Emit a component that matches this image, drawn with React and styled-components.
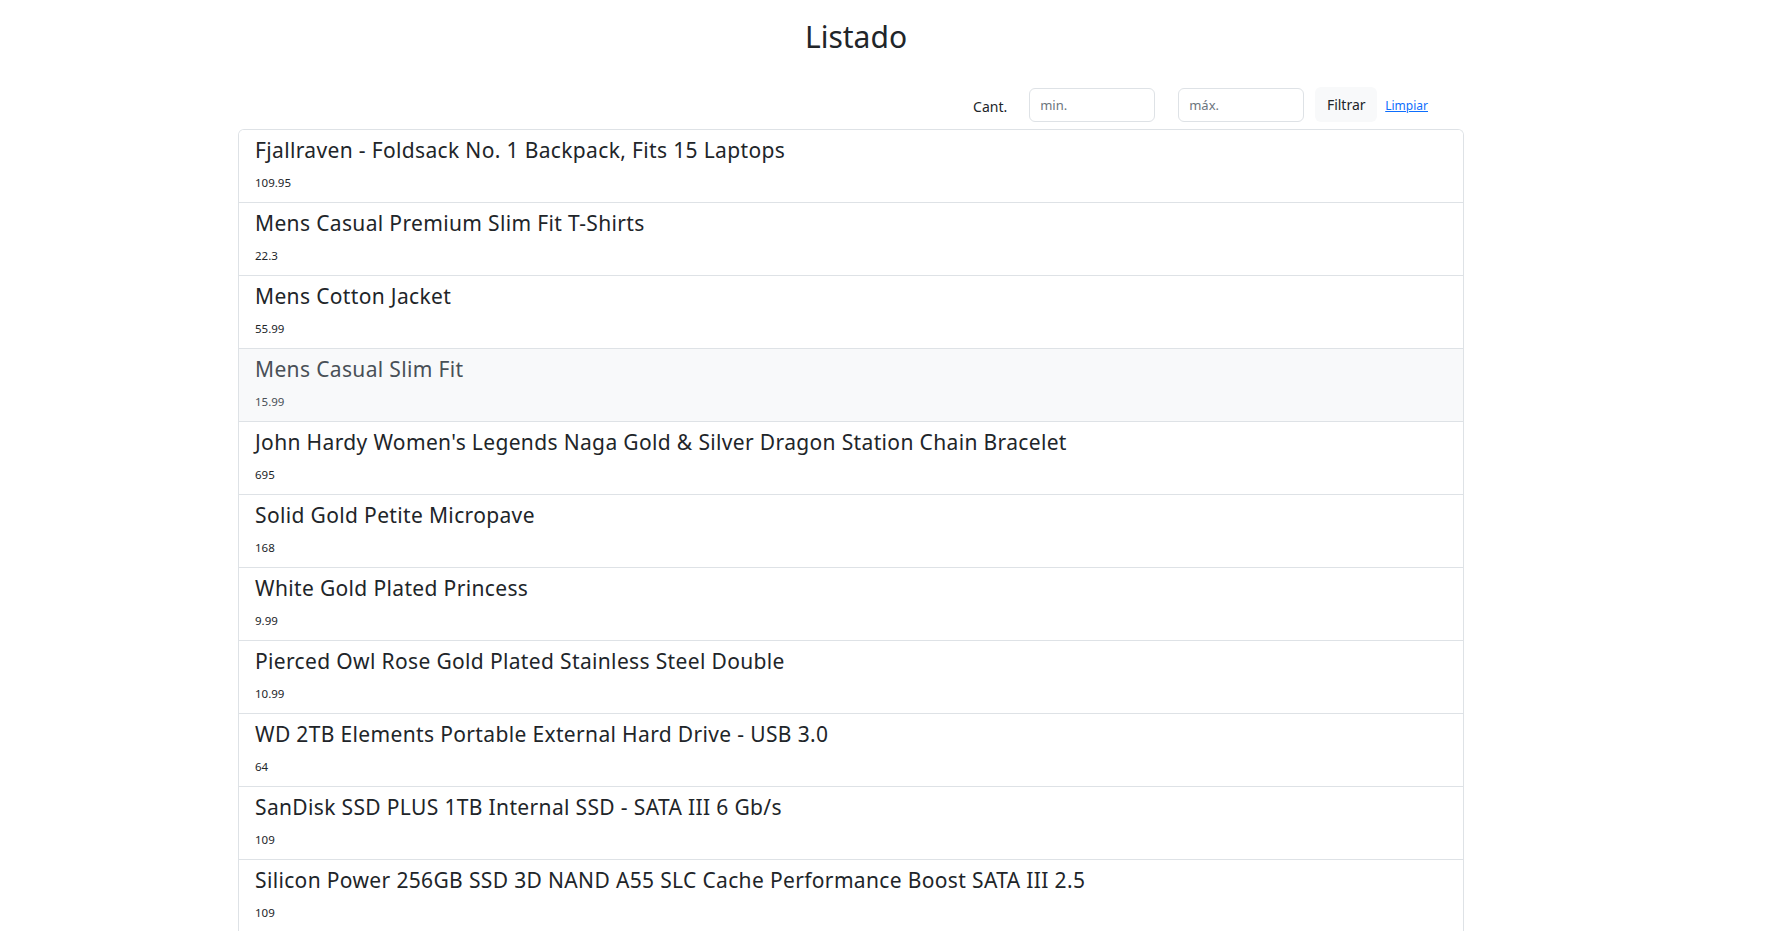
import React from "react";
import styled, { createGlobalStyle } from "styled-components";

const Global = createGlobalStyle`
  html, body { margin: 0; padding: 0; background: #fff; }
  body {
    font-family: "Noto Sans", "Open Sans", sans-serif;
    color: #212529;
  }
  * { box-sizing: border-box; }
`;

const Page = styled.div`
  width: 1226px;
  margin-left: 238px;
  padding-top: 18px;
`;

const Title = styled.h2`
  margin: 0;
  font-size: 30px;
  font-weight: 400;
  line-height: 38px;
  text-align: center;
  color: #212529;
  padding-left: 10px;
`;

const FilterBar = styled.form`
  display: flex;
  justify-content: flex-end;
  align-items: center;
  margin-top: 31px;
  padding-right: 36px;
  height: 35px;
  margin-bottom: 7px;
`;

const Label = styled.span`
  font-size: 14px;
  margin-right: 22px;
  padding-top: 3px;
`;

const Input = styled.input`
  width: 126px;
  height: 34px;
  border: 1px solid #dee2e6;
  border-radius: 6px;
  padding: 4px 10px;
  font-family: inherit;
  font-size: 13px;
  color: #212529;
  margin-right: ${(p) => p.$gap}px;
  &::placeholder { color: #6c757d; }
`;

const Button = styled.button`
  height: 35px;
  width: 62px;
  border: none;
  border-radius: 6px;
  background: #f8f9fa;
  font-family: inherit;
  font-size: 14px;
  color: #212529;
  padding: 0;
  margin-right: 8px;
`;

const Link = styled.a`
  font-size: 12px;
  color: #0d6efd;
  text-decoration: underline;
  padding-top: 2px;
`;

const List = styled.div`
  border: 1px solid #dee2e6;
  border-bottom: none;
  border-radius: 6px 6px 0 0;
  overflow: hidden;
`;

const Item = styled.div`
  box-sizing: content-box;
  padding: 8px 16px;
  height: 56px;
  border-top: ${(p) => (p.$first ? "none" : "1px solid #dee2e6")};
  background: ${(p) => (p.$hover ? "#f8f9fa" : "#fff")};
  color: ${(p) => (p.$hover ? "#495057" : "#212529")};
`;

const ItemTitle = styled.h5`
  margin: 0 0 9px 0;
  font-size: 21px;
  font-weight: 400;
  line-height: 24px;
  letter-spacing: 0.35px;
`;

const Price = styled.div`
  font-size: 11.5px;
  line-height: 24px;
`;

const items = [
  ["Fjallraven - Foldsack No. 1 Backpack, Fits 15 Laptops", "109.95"],
  ["Mens Casual Premium Slim Fit T-Shirts", "22.3"],
  ["Mens Cotton Jacket", "55.99"],
  ["Mens Casual Slim Fit", "15.99"],
  ["John Hardy Women's Legends Naga Gold & Silver Dragon Station Chain Bracelet", "695"],
  ["Solid Gold Petite Micropave", "168"],
  ["White Gold Plated Princess", "9.99"],
  ["Pierced Owl Rose Gold Plated Stainless Steel Double", "10.99"],
  ["WD 2TB Elements Portable External Hard Drive - USB 3.0", "64"],
  ["SanDisk SSD PLUS 1TB Internal SSD - SATA III 6 Gb/s", "109"],
  ["Silicon Power 256GB SSD 3D NAND A55 SLC Cache Performance Boost SATA III 2.5", "109"],
];

export default function App() {
  return (
    <>
      <Global />
      <Page>
        <Title>Listado</Title>
        <FilterBar onSubmit={(e) => e.preventDefault()}>
          <Label>Cant.</Label>
          <Input placeholder="min." $gap={23} />
          <Input placeholder="máx." $gap={11} />
          <Button type="submit">Filtrar</Button>
          <Link href="#">Limpiar</Link>
        </FilterBar>
        <List>
          {items.map(([t, p], i) => (
            <Item key={i} $first={i === 0} $hover={i === 3}>
              <ItemTitle>{t}</ItemTitle>
              <Price>{p}</Price>
            </Item>
          ))}
        </List>
      </Page>
    </>
  );
}
